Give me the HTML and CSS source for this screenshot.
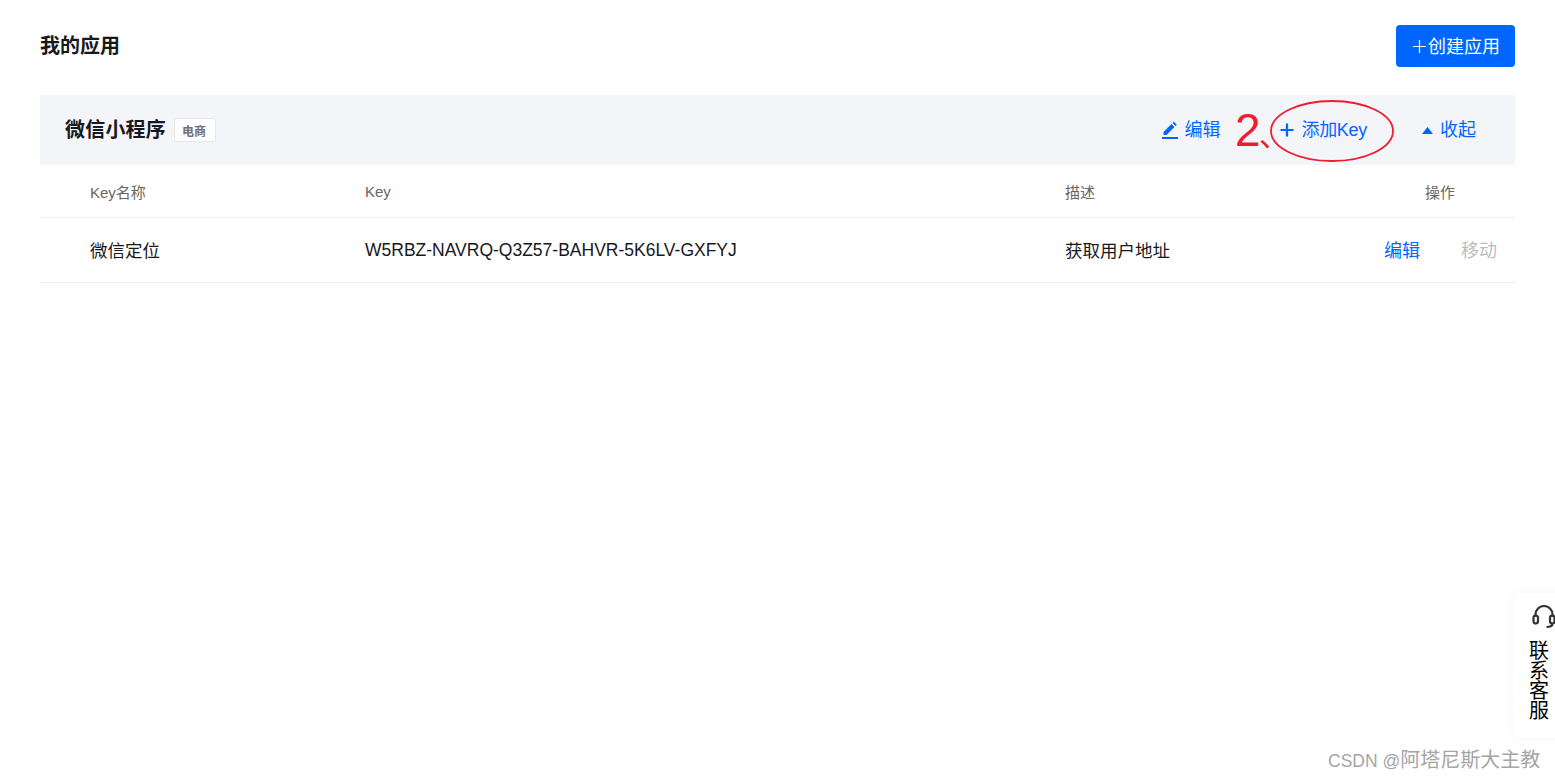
FILE: index.html
```html
<!DOCTYPE html>
<html lang="zh">
<head>
<meta charset="utf-8">
<title>我的应用</title>
<link rel="stylesheet" href="styles.css">
</head>
<body>
<main class="page">
  <header class="head">
    <h1 class="title">我的应用</h1>
    <button class="create"><svg class="create-plus" width="13" height="13" viewBox="0 0 13 13"><path d="M6.500 0v13M0 6.500h13" stroke="#fff" stroke-width="1.200"/></svg><span class="create-text">创建应用</span></button>
  </header>
  <section class="app">
    <div class="app-bar">
      <div class="app-name">
        <h2 class="name">微信小程序</h2>
        <span class="tag">电商</span>
      </div>
      <div class="app-actions">
        <a class="action act-edit">
          <svg class="ic" width="18" height="18" viewBox="0 0 18 18"><path d="M1 17h16" stroke="#0066ff" stroke-width="2"/><path d="M2.500 14v-3l8-8 3 3-8 8zM11.500 2l1.300-1.300 3 3L14.500 5z" fill="#0066ff"/></svg>
          <span class="action-text">编辑</span>
        </a>
        <a class="action act-add">
          <svg class="ic" width="14" height="14" viewBox="0 0 14 14"><path d="M7 .5v13M.5 7h13" stroke="#0066ff" stroke-width="2.200"/></svg>
          <span class="action-text">添加Key</span>
        </a>
        <a class="action act-fold">
          <svg class="ic" width="11" height="7" viewBox="0 0 11 7"><path d="M5.500 0 11 7H0z" fill="#0066ff"/></svg>
          <span class="action-text">收起</span>
        </a>
      </div>
    </div>
    <div class="row row-head">
      <div class="c1">Key名称</div>
      <div class="c2">Key</div>
      <div class="c3">描述</div>
      <div class="c4">操作</div>
    </div>
    <div class="row row-body">
      <div class="c1">微信定位</div>
      <div class="c2">W5RBZ-NAVRQ-Q3Z57-BAHVR-5K6LV-GXFYJ</div>
      <div class="c3">获取用户地址</div>
      <div class="c4 ops"><a class="link">编辑</a><a class="link off">移动</a></div>
    </div>
  </section>
</main>

<div class="note-num">2<span class="note-dun">、</span></div>
<svg class="note-ring" width="126" height="66" viewBox="0 0 126 66"><ellipse cx="63" cy="33" rx="61" ry="30" fill="none" stroke="#ee1c2e" stroke-width="1.800"/></svg>

<aside class="service">
  <svg class="service-ic" width="24" height="24" viewBox="0 0 24 24"><path d="M3.500 12V9.500a8.500 8.500 0 0 1 17 0V12" fill="none" stroke="#333" stroke-width="2.200"/><rect x="1.500" y="10.500" width="4.500" height="8" rx="2.200" fill="none" stroke="#333" stroke-width="2.200"/><rect x="18" y="10.500" width="4.500" height="8" rx="2.200" fill="none" stroke="#333" stroke-width="2.200"/><path d="M20.500 18.500c0 2.500-2 3.500-6 3.500" fill="none" stroke="#333" stroke-width="2.200"/></svg>
  <div class="service-text">联系客服</div>
</aside>
<div class="mark"><span class="mark-latin">CSDN @</span>阿塔尼斯大主教</div>
</body>
</html>
```
FILE: styles.css
```css
* { box-sizing: border-box; }
html, body { margin: 0; height: 100%; overflow: hidden; background: #fff; }
body { font-family: "Liberation Sans", "Noto Sans CJK SC", sans-serif; color: #16181d; font-size: 18px; }
.page { padding: 25px 40px 0; }
.head { display: flex; justify-content: space-between; align-items: center; height: 42px; margin-bottom: 28px; }
.title { margin: 0; font-size: 20px; font-weight: 700; line-height: 42px; }
.create { display: flex; align-items: center; justify-content: flex-start; width: 119px; height: 42px; border: 0; border-radius: 4px; background: #0066ff; color: #fff; font: inherit; font-size: 18px; padding: 0 0 0 17px; }
.create-plus { margin-right: 3px; }
.create-text { margin-top: -3px; margin-left: -1px; }
.app-bar { display: flex; justify-content: space-between; align-items: center; height: 70px; background: #f4f5f9; padding: 0 39px 0 25px; }
.app-name { display: flex; align-items: center; gap: 8px; }
.name { margin: 0; font-size: 20px; font-weight: 700; letter-spacing: .2px; padding-bottom: 4px; }
.tag { display: flex; align-items: center; justify-content: center; width: 42px; height: 24px; background: #fff; border: 1px solid #e4e6eb; border-radius: 2px; font-size: 12px; font-weight: 700; color: #6e7078; padding-right: 2px; }
.app-actions { display: flex; align-items: center; }
.action { display: flex; align-items: center; color: #0066ff; font-size: 18px; }
.action-text { padding-bottom: 4px; }
.act-edit { gap: 5px; margin-right: 2px; }
.act-add { gap: 7px; margin-left: 58px; letter-spacing: -.3px; }
.act-fold { gap: 7px; margin-left: 55px; }
.row { display: flex; align-items: center; border-bottom: 1px solid #ebedf0; }
.row-head { height: 53px; font-size: 15px; color: #6c6661; }
.row-body { height: 65px; font-size: 17.5px; }
.c1 { width: 325px; padding-left: 50px; }
.c2 { width: 700px; }
.c3 { width: 360px; }
.c4 { flex: 1; }
.row-body .c1, .row-body .c3, .row-body .c4 { padding-bottom: 2px; }
.ops { display: flex; gap: 41px; margin-left: -41px; font-size: 18px; }
.link { color: #0066ff; white-space: nowrap; }
.off { color: #bbbdc2; }
.note-num { position: absolute; left: 1235px; top: 104px; font-size: 46px; line-height: 52px; color: #ee1c2e; font-family: "Liberation Sans", sans-serif; font-weight: 400; }
.note-dun { position: absolute; left: 24px; top: 9px; font-size: 30px; line-height: 40px; font-family: "Noto Sans CJK SC", sans-serif; white-space: nowrap; }
.note-ring { position: absolute; left: 1269px; top: 98px; }
.service { position: absolute; left: 1513px; top: 593px; width: 60px; height: 144px; background: #fff; box-shadow: 0 0 10px rgba(0,0,0,.04); padding: 12px 0 0 19px; }
.service-ic { display: block; }
.service-text { width: 20px; margin: 12px 0 0 -3px; font-size: 20px; line-height: 20px; color: #000; }
.mark { position: absolute; left: 1328px; top: 747px; font-size: 20px; line-height: 26px; color: #a5a5a5; white-space: nowrap; }
.mark-latin { font-size: 17.5px; }
```
